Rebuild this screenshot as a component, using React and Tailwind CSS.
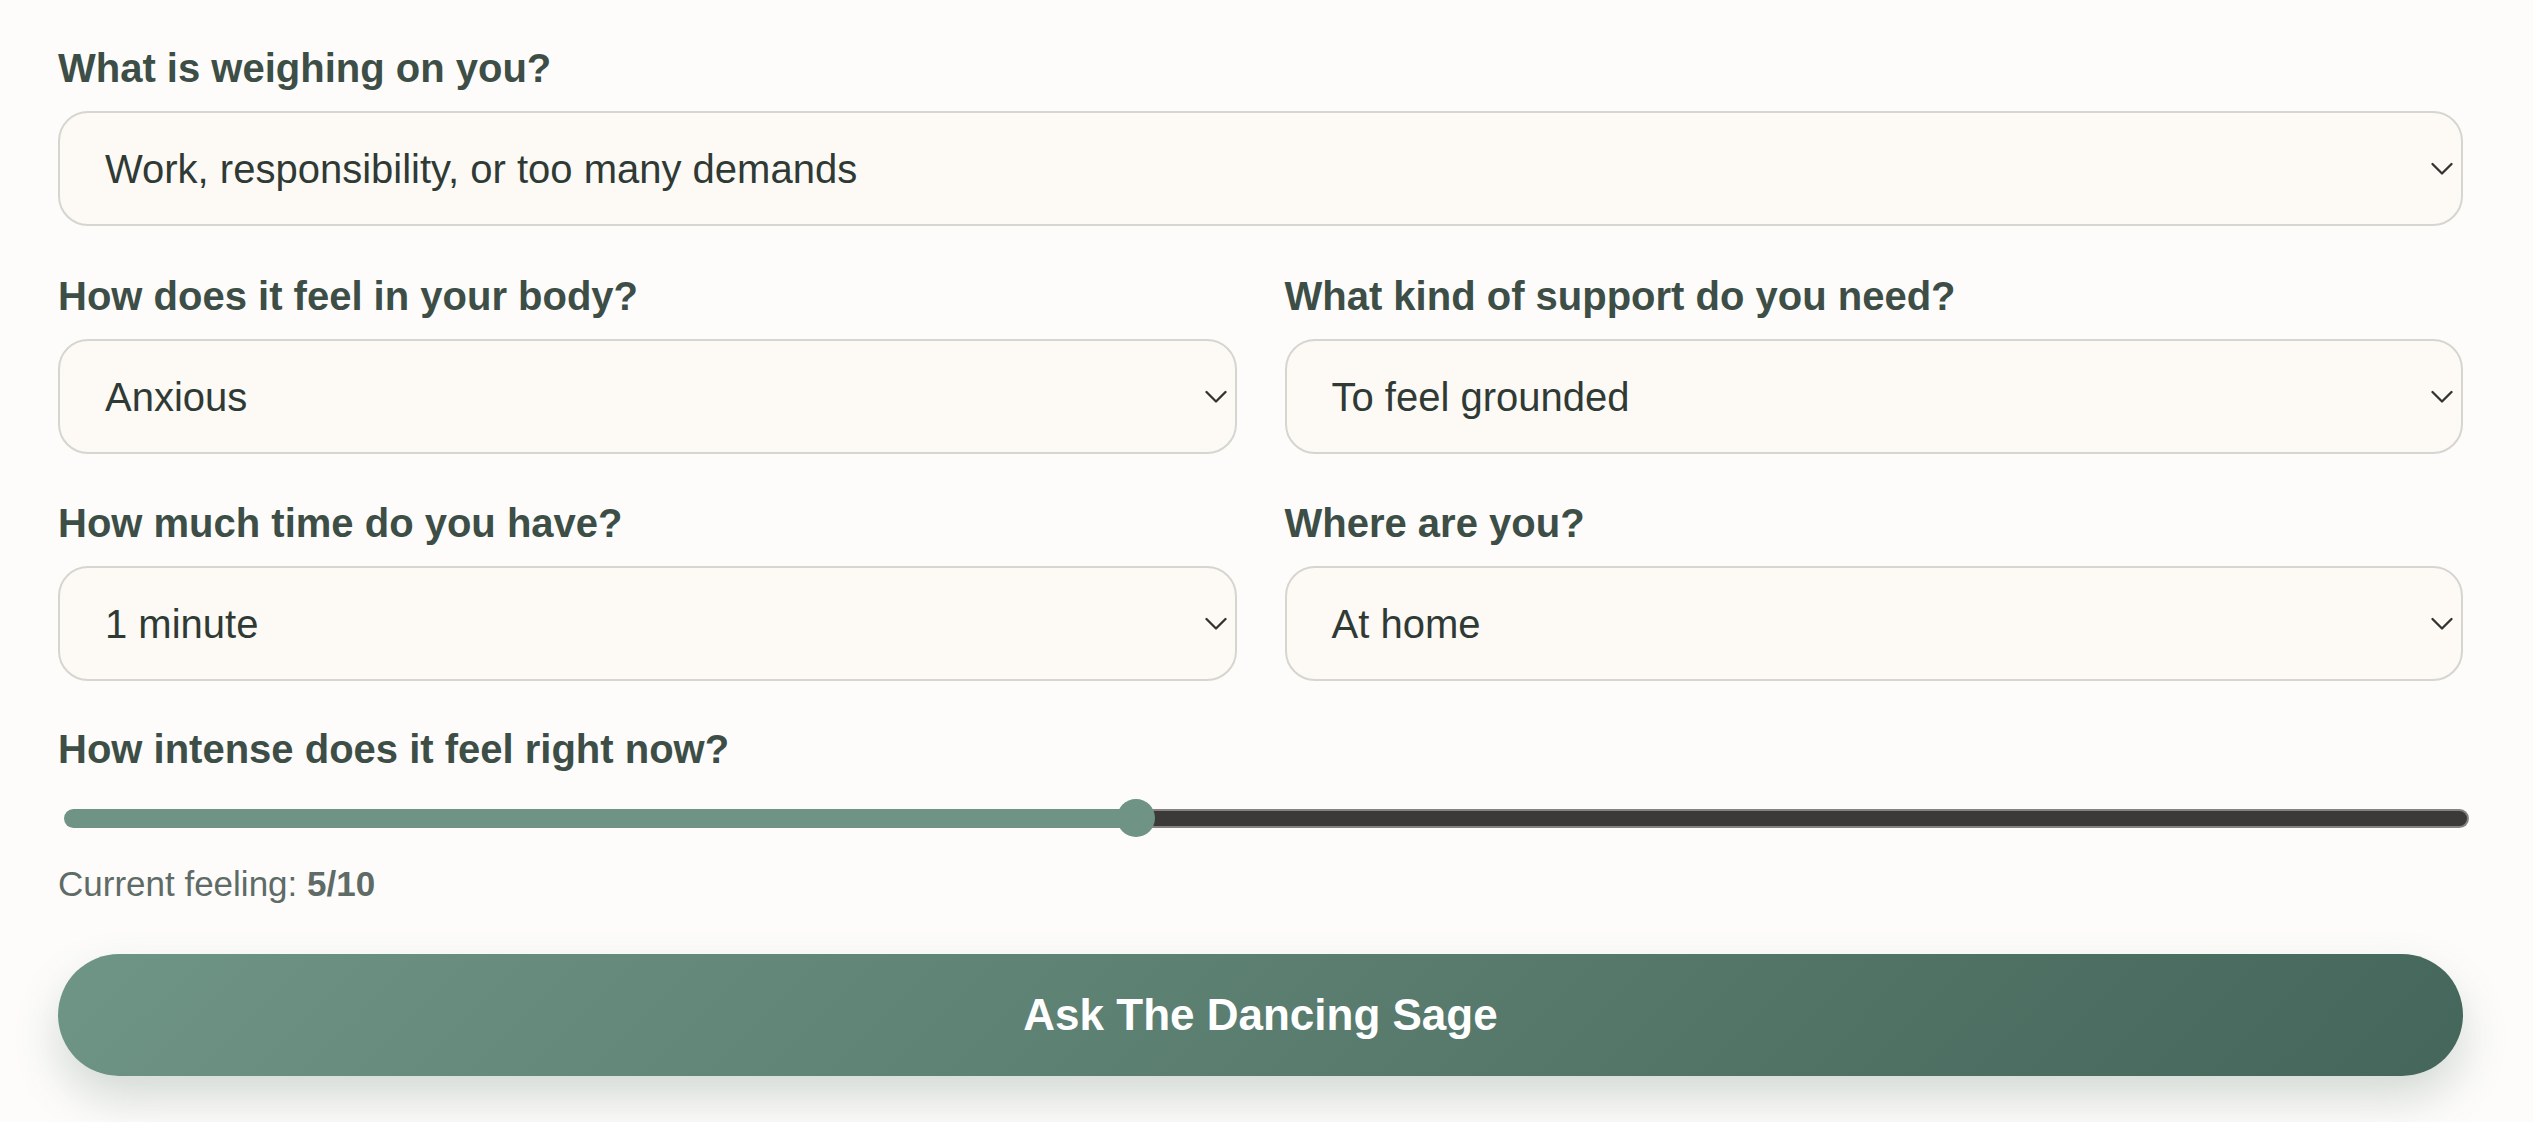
import React from "react";

function Chevron() {
  return (
    <svg width="22" height="14" viewBox="0 0 22 14" fill="none" className="shrink-0">
      <path d="M1.5 2 L11 11.5 L20.5 2" stroke="#333331" strokeWidth="2.3" strokeLinecap="round" strokeLinejoin="round" />
    </svg>
  );
}

function Field({ label, value }) {
  return (
    <div className="flex flex-col gap-[20px]">
      <div className="text-[40px] leading-[46px] font-bold text-[#3d4e47]">{label}</div>
      <div className="h-[115px] rounded-[30px] border-2 border-[#d6d6d0] bg-[#fdf9f5] flex items-center justify-between pl-[45px] pr-[8px]">
        <span className="text-[40px] leading-[46px] text-[#2f3a35]">{value}</span>
        <Chevron />
      </div>
    </div>
  );
}

export default function App() {
  return (
    <div className="min-h-[1122px] w-full bg-[#fdfcfb] font-['Liberation_Sans',Arial,sans-serif]">
      <div className="pl-[58px] pr-[70px] pt-[45px] flex flex-col">
        <Field label="What is weighing on you?" value="Work, responsibility, or too many demands" />
        <div className="grid grid-cols-2 gap-x-[48px] gap-y-[46px] mt-[47px]">
          <Field label="How does it feel in your body?" value="Anxious" />
          <Field label="What kind of support do you need?" value="To feel grounded" />
          <Field label="How much time do you have?" value="1 minute" />
          <Field label="Where are you?" value="At home" />
        </div>
        <div className="mt-[45px] text-[40px] leading-[46px] font-bold text-[#3d4e47]">
          How intense does it feel right now?
        </div>
        <div className="relative mt-[27px] h-[38px] ml-[6px] mr-[-6px] flex items-center">
          <div className="w-[44.6%] h-[19px] bg-[#6f9384] rounded-l-full" />
          <div className="flex-1 h-[19px] bg-[#3b3a38] border-y-2 border-r-2 border-[#858483] rounded-r-full" />
          <div className="absolute left-[43.8%] top-0 w-[38px] h-[38px] rounded-full bg-[#6f9384]" />
        </div>
        <div className="mt-[27px] text-[35px] leading-[40px] text-[#5e6b66]">
          Current feeling: <span className="font-bold">5/10</span>
        </div>
        <button className="mt-[50px] h-[122px] w-full rounded-full bg-[linear-gradient(135deg,#6f9586,#45665a)] text-white text-[44px] font-bold shadow-[0_22px_45px_rgba(70,100,88,0.22)]">
          Ask The Dancing Sage
        </button>
      </div>
    </div>
  );
}
